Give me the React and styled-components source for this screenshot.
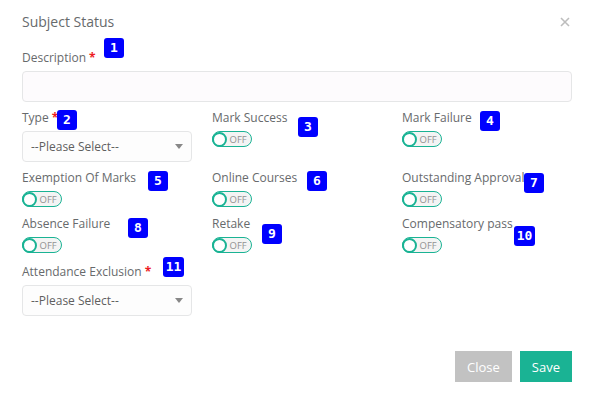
import React from "react";
import styled, { createGlobalStyle } from "styled-components";

const GlobalStyle = createGlobalStyle`
  html, body {
    margin: 0;
    padding: 0;
    background: #ffffff;
    font-family: "Open Sans", "Liberation Sans", sans-serif;
  }
`;

const Modal = styled.div`
  position: relative;
  width: 595px;
  height: 398px;
  box-sizing: border-box;
  padding: 12px 23px 0 22px;
  background: #fff;
  color: #676a6c;
`;

const Header = styled.div`
  display: flex;
  align-items: center;
  justify-content: space-between;
  height: 20px;
  margin-bottom: 17px;
`;

const Title = styled.h4`
  margin: 0;
  font-size: 14px;
  font-weight: 500;
  color: #676a6c;
  line-height: 20px;
`;

const CloseX = styled.button`
  display: flex;
  border: 0;
  padding: 0;
  margin-right: 2px;
  background: none;
  cursor: pointer;
`;

const Field = styled.div`
  display: flex;
  flex-direction: column;
  align-items: flex-start;
  margin-bottom: ${(p) => p.$gap || 8}px;
`;

const Label = styled.label`
  font-size: 12px;
  font-weight: 500;
  line-height: 18px;
  margin-bottom: 4px;
  color: #676a6c;
  white-space: nowrap;
`;

const Req = styled.span`
  color: #ed1c24;
  font-weight: 700;
  margin-left: 3px;
`;

const Input = styled.div`
  width: 100%;
  height: 31px;
  box-sizing: border-box;
  border: 1px solid #e5e6e7;
  border-radius: 4px;
  background: #fdfbfd;
`;

const Select = styled.div`
  width: 170px;
  height: 31px;
  box-sizing: border-box;
  display: flex;
  align-items: center;
  justify-content: space-between;
  padding: 0 8px 0 8px;
  border: 1px solid #e5e6e7;
  border-radius: 4px;
  background: #fdfdfd;
  font-size: 12px;
  color: #5f5f5f;
`;

const Caret = styled.span`
  width: 0;
  height: 0;
  border-left: 4px solid transparent;
  border-right: 4px solid transparent;
  border-top: 5px solid #888;
`;

const Grid = styled.div`
  display: grid;
  grid-template-columns: repeat(3, 170px);
  column-gap: 20px;
  align-items: start;
`;

const Toggle = styled.div`
  width: 40px;
  height: 16px;
  box-sizing: border-box;
  border: 1.5px solid #1ab394;
  border-radius: 9px;
  background: #f4f4f4;
  display: flex;
  align-items: center;
`;

const Knob = styled.span`
  width: 15px;
  height: 15px;
  flex-shrink: 0;
  box-sizing: border-box;
  border: 2.5px solid #1ab394;
  border-radius: 50%;
  background: #fff;
  margin-left: -1.5px;
`;

const ToggleText = styled.span`
  font-size: 9.5px;
  font-weight: 400;
  color: #929292;
  margin-left: 3px;
`;

const Footer = styled.div`
  display: flex;
  justify-content: flex-end;
  gap: 8px;
  margin-top: 27px;
`;

const Button = styled.button`
  height: 31px;
  padding: 0 ${(p) => p.$pad}px;
  border: 0;
  border-radius: 0;
  background: ${(p) => p.$bg};
  color: #fff;
  font-family: "Open Sans", "Liberation Sans", sans-serif;
  font-size: 13px;
`;

const Badge = styled.span`
  position: absolute;
  left: ${(p) => p.$x}px;
  top: ${(p) => p.$y}px;
  width: ${(p) => p.$w || 20}px;
  height: 20px;
  border-radius: 3px;
  background: #0000ff;
  color: #fff;
  font-family: "DejaVu Sans Mono", monospace;
  font-weight: bold;
  font-size: 13px;
  line-height: 20px;
  text-align: center;
`;

const Switch = () => (
  <Toggle>
    <Knob />
    <ToggleText>OFF</ToggleText>
  </Toggle>
);

const Dropdown = () => (
  <Select>
    <span>--Please Select--</span>
    <Caret />
  </Select>
);

const toggleFields = [
  { name: "Exemption Of Marks" },
  { name: "Online Courses" },
  { name: "Outstanding Approval" },
  { name: "Absence Failure", gap: 10 },
  { name: "Retake", gap: 10 },
  { name: "Compensatory pass", gap: 10 },
];

const badges = [
  { n: 1, x: 104, y: 38 },
  { n: 2, x: 57, y: 110 },
  { n: 3, x: 298, y: 117 },
  { n: 4, x: 480, y: 111 },
  { n: 5, x: 148, y: 171 },
  { n: 6, x: 307, y: 171 },
  { n: 7, x: 524, y: 173 },
  { n: 8, x: 128, y: 218 },
  { n: 9, x: 262, y: 224 },
  { n: 10, x: 514, y: 226, w: 21 },
  { n: 11, x: 163, y: 257, w: 21 },
];

const App = () => {
  return (
    <>
      <GlobalStyle />
      <Modal>
        <Header>
          <Title>Subject Status</Title>
          <CloseX aria-label="close">
            <svg width="10" height="10" viewBox="0 0 10 10">
              <path d="M1 1 L9 9 M9 1 L1 9" stroke="#bdbdbd" strokeWidth="1.6" />
            </svg>
          </CloseX>
        </Header>

        <Field $gap={7}>
          <Label>
            Description<Req>*</Req>
          </Label>
          <Input />
        </Field>

        <Grid>
          <Field $gap={7}>
            <Label>
              Type<Req>*</Req>
            </Label>
            <Dropdown />
          </Field>
          <Field>
            <Label>Mark Success</Label>
            <Switch />
          </Field>
          <Field>
            <Label>Mark Failure</Label>
            <Switch />
          </Field>
          {toggleFields.map((f) => (
            <Field key={f.name} $gap={f.gap}>
              <Label>{f.name}</Label>
              <Switch />
            </Field>
          ))}
          <Field>
            <Label>
              Attendance Exclusion<Req>*</Req>
            </Label>
            <Dropdown />
          </Field>
        </Grid>

        <Footer>
          <Button $bg="#c2c2c2" $pad={12}>Close</Button>
          <Button $bg="#1ab394" $pad={12}>Save</Button>
        </Footer>

        {badges.map((b) => (
          <Badge key={b.n} $x={b.x} $y={b.y} $w={b.w}>
            {b.n}
          </Badge>
        ))}
      </Modal>
    </>
  );
};

export default App;
